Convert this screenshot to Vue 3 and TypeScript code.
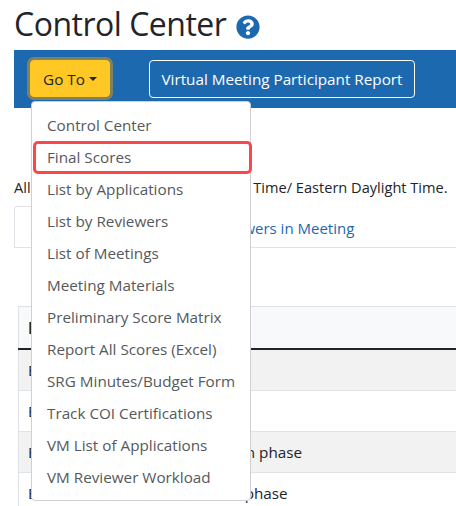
<script setup lang="ts">
const menu: string[] = [
  'Control Center',
  'Final Scores',
  'List by Applications',
  'List by Reviewers',
  'List of Meetings',
  'Meeting Materials',
  'Preliminary Score Matrix',
  'Report All Scores (Excel)',
  'SRG Minutes/Budget Form',
  'Track COI Certifications',
  'VM List of Applications',
  'VM Reviewer Workload',
]
const rows: { text: string; striped: boolean }[] = [
  { text: 'Edit', striped: true },
  { text: 'Edit', striped: false },
  { text: 'Edit all scores at this application phase', striped: true },
  { text: 'Edit scores in the formal audit phase', striped: false },
]
</script>

<template>
  <div class="page">
    <h1 class="title">
      Control Center
      <svg class="help" viewBox="0 0 512 512" aria-hidden="true">
        <path fill="#1d69b0" d="M504 256c0 137-111 248-248 248S8 393 8 256 119 8 256 8s248 111 248 248zM262.700 90c-54.500 0-89.300 23-116.500 63.800-3.500 5.300-2.300 12.400 2.800 16.300l34.700 26.300c5.200 3.900 12.600 3 16.700-2.100 17.900-22.700 30.100-35.800 57.300-35.800 20.400 0 45.700 13.100 45.700 33 0 15-12.400 22.700-32.600 34-23.600 13.200-54.800 29.700-54.800 70.900V300c0 6.600 5.400 12 12 12h56c6.600 0 12-5.400 12-12v-1.300c0-28.600 83.500-29.800 83.500-107.100C379.500 133.300 319 90 262.700 90zM256 339c-25.400 0-46 20.600-46 46 0 25.400 20.600 46 46 46s46-20.600 46-46c0-25.400-20.600-46-46-46z"/>
      </svg>
    </h1>

    <div class="toolbar">
      <div class="dropdown">
        <button class="goto" type="button">Go To<span class="caret"></span></button>
        <ul class="menu">
          <li v-for="item in menu" :key="item" class="menu-item" :class="{ marked: item === 'Final Scores' }">{{ item }}</li>
        </ul>
      </div>
      <button class="report" type="button">Virtual Meeting Participant Report</button>
    </div>

    <p class="note">All times given in Eastern Standard Time/ Eastern Daylight Time.</p>

    <div class="tabs">
      <span class="tab active">Applications</span>
      <span class="tab link">Reviewers in Meeting</span>
    </div>

    <table class="grid">
      <thead>
        <tr><th>Phase</th></tr>
      </thead>
      <tbody>
        <tr v-for="(row, i) in rows" :key="i" :class="{ striped: row.striped }">
          <td>{{ row.text }}</td>
        </tr>
      </tbody>
    </table>
  </div>
</template>

<style>
html, body {
  margin: 0;
  background: #fff;
  overflow: hidden;
}
</style>

<style scoped>
.page {
  width: 456px;
  height: 506px;
  overflow: hidden;
  box-sizing: border-box;
  padding: 0 0 0 14px;
  font-family: "Open Sans", "Noto Sans", sans-serif;
  font-size: 15.25px;
  color: #212529;
}
.title {
  margin: 0;
  height: 50px;
  box-sizing: border-box;
  padding-bottom: 2px;
  display: flex;
  align-items: center;
  gap: 10px;
  font-size: 32px;
  letter-spacing: -0.5px;
  line-height: 48px;
  font-weight: 500;
  white-space: nowrap;
}
.help {
  width: 24px;
  height: 24px;
  margin-top: 5px;
}
.toolbar {
  height: 58px;
  width: 442px;
  background: #1d69b0;
  display: flex;
  align-items: flex-start;
  padding: 10px 0 0 16px;
  box-sizing: border-box;
  gap: 39px;
}
.dropdown {
  position: relative;
}
.goto {
  width: 80px;
  height: 37px;
  padding: 0;
  border: 1px solid #ffc825;
  border-radius: 4px;
  background: #ffc825;
  color: #212529;
  font: inherit;
  box-shadow: 0 0 0 3px #7f8160;
  display: flex;
  align-items: center;
  justify-content: center;
}
.caret {
  margin-left: 4px;
  margin-top: 0;
  border-top: 4.500px solid #212529;
  border-left: 4.500px solid transparent;
  border-right: 4.500px solid transparent;
}
.report {
  width: 266px;
  height: 38px;
  padding: 0;
  border: 1px solid #fff;
  border-radius: 4px;
  background: transparent;
  color: #fff;
  font: inherit;
  white-space: nowrap;
}
.menu {
  position: absolute;
  z-index: 5;
  top: 41px;
  left: 1px;
  width: 220px;
  height: 400px;
  box-sizing: border-box;
  margin: 0;
  padding: 7px 0;
  list-style: none;
  background: #fff;
  border: 1px solid #d0d0d4;
  border-radius: 4px;
  color: #55595c;
}
.menu-item {
  height: 32px;
  line-height: 32px;
  padding-left: 15px;
  white-space: nowrap;
}
.marked {
  position: relative;
}
.marked::after {
  content: "";
  position: absolute;
  left: 1px;
  right: -2px;
  top: 0;
  bottom: -1px;
  border: 3px solid #f9484c;
  border-radius: 5px;
}
.note {
  margin: 0;
  padding-top: 68px;
  height: 30px;
  line-height: 22px;
  font-size: 14.6px;
  white-space: nowrap;
}
.tabs {
  margin-top: 0;
  display: flex;
  height: 41px;
  border-bottom: 1px solid #dee2e6;
  box-sizing: content-box;
}
.tab {
  line-height: 44px;
  white-space: nowrap;
}
.active {
  width: 176px;
  box-sizing: border-box;
  border: 1px solid #dee2e6;
  border-bottom: 0;
  border-radius: 4px 4px 0 0;
  padding-left: 16px;
}
.link {
  padding-left: 16px;
  font-size: 15px;
  color: #1d69b0;
}
.grid {
  margin: 58px 0 0 4px;
  width: 438px;
  border-collapse: collapse;
}
.grid th {
  height: 41px;
  padding: 0 0 0 9px;
  text-align: left;
  font-weight: 700;
  background: #f8f9fa;
  border-top: 1px solid #dee2e6;
  border-bottom: 2px solid #212529;
  border-left: 1px solid #dee2e6;
}
.grid td {
  height: 40px;
  padding: 0 0 0 9px;
  border-bottom: 1px solid #dee2e6;
  border-left: 1px solid #dee2e6;
}
.striped td {
  background: #f2f2f2;
}
</style>
